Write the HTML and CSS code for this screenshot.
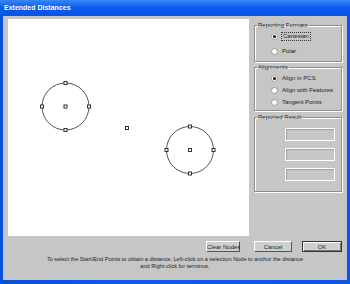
FILE: index.html
```html
<!DOCTYPE html>
<html lang="en">
<head>
<meta charset="UTF-8">
<title>Extended Distances</title>
<link rel="stylesheet" href="styles.css">
</head>
<body>
<div class="window">
  <div class="titlebar">Extended Distances</div>
  <div class="client">
    <div class="main">
      <div class="canvas">
        <svg width="241" height="217" viewBox="0 0 241 217">
          <g fill="none" stroke="#555" stroke-width="1">
            <circle cx="57.5" cy="87.5" r="23.5"/>
            <circle cx="182" cy="131" r="23.5"/>
          </g>
          <g fill="#fff" stroke="#333" stroke-width="1">
            <rect x="56" y="62.5" width="3" height="3"/>
            <rect x="56" y="109.5" width="3" height="3"/>
            <rect x="32.5" y="86" width="3" height="3"/>
            <rect x="79.5" y="86" width="3" height="3"/>
            <rect x="56" y="86" width="3" height="3"/>
            <rect x="180.5" y="106" width="3" height="3"/>
            <rect x="180.5" y="153" width="3" height="3"/>
            <rect x="157" y="129.5" width="3" height="3"/>
            <rect x="204" y="129.5" width="3" height="3"/>
            <rect x="180.5" y="129.5" width="3" height="3"/>
            <rect x="117.5" y="107.5" width="3" height="3"/>
          </g>
        </svg>
      </div>
      <div class="side">
        <fieldset class="group formats">
          <legend>Reporting Formats</legend>
          <label class="radio"><span class="dot checked"></span><span class="focus">Cartesian</span></label>
          <label class="radio"><span class="dot"></span>Polar</label>
        </fieldset>
        <fieldset class="group aligns">
          <legend>Alignments</legend>
          <label class="radio"><span class="dot checked"></span>Align in PCS</label>
          <label class="radio"><span class="dot"></span>Align with Features</label>
          <label class="radio"><span class="dot"></span>Tangent Points</label>
        </fieldset>
        <fieldset class="group result">
          <legend>Reported Result</legend>
          <div class="field"></div>
          <div class="field"></div>
          <div class="field"></div>
        </fieldset>
      </div>
    </div>
    <div class="buttons">
      <button class="btn clear">Clear Nodes</button>
      <button class="btn cancel">Cancel</button>
      <button class="btn ok">OK</button>
    </div>
    <p class="hint">To select the Start/End Points to obtain a distance. Left-click on a selection Node to anchor the distance<br>and Right-click for terminus.</p>
  </div>
</div>
</body>
</html>
```

FILE: styles.css
```css
body {
  margin: 0;
  padding: 0;
  font-family: "Liberation Sans", Arial, sans-serif;
}

.window {
  width: 350px;
  height: 284px;
  box-sizing: border-box;
  display: flex;
  flex-direction: column;
  padding: 0 3px 4px 3px;
  background: linear-gradient(to right, #0a4fd8, #0e5cf0 40%, #0b55e8);
}

.titlebar {
  height: 16px;
  line-height: 15px;
  color: #fff;
  font-size: 7px;
  font-weight: bold;
  background: linear-gradient(to bottom, #3a86fa, #0c5eec 45%, #0654e4);
  margin: 0 -3px;
  padding-left: 4px;
}

.client {
  flex: 1;
  display: flex;
  flex-direction: column;
  background: #c6c6c6;
  padding: 3px 5px 0 5px;
}

.main {
  display: flex;
  gap: 5px;
}

.canvas {
  width: 241px;
  height: 217px;
  background: #fff;
}

.canvas svg {
  display: block;
}

.side {
  width: 90px;
  padding-top: 2px;
}

.group {
  margin: 0 0 1px 0;
  padding: 0 0 0 16px;
  border: 1px solid #8e8e8e;
  box-shadow: 1px 1px 0 #fff, inset 1px 1px 0 #fff;
  display: flex;
  flex-direction: column;
  font-size: 6px;
  color: #222;
}

.group legend {
  padding: 0 1px;
  margin-left: -14px;
  line-height: 8px;
  font-size: 6px;
  color: #222;
}

.formats {
  padding-top: 2px;
  padding-bottom: 5px;
  gap: 5px;
}

.aligns {
  padding-top: 2px;
  padding-bottom: 3px;
  gap: 2px;
}

.result {
  padding-top: 7px;
  padding-bottom: 10px;
  margin-top: 2px;
}

.radio {
  display: flex;
  align-items: center;
  height: 10px;
  gap: 4px;
  white-space: nowrap;
}

.dot {
  width: 5px;
  height: 5px;
  border-radius: 50%;
  background: #fff;
  border: 1px solid #9a9a9a;
  box-sizing: content-box;
  display: flex;
  align-items: center;
  justify-content: center;
}

.dot.checked::after {
  content: "";
  width: 3px;
  height: 3px;
  border-radius: 50%;
  background: #111;
}

.focus {
  outline: 1px dotted #333;
  padding: 0 1px;
  line-height: 7px;
}

.field {
  align-self: flex-end;
  width: 48px;
  height: 11px;
  margin-right: 6px;
  margin-bottom: 7px;
  background: #c6c6c6;
  border: 1px solid #fff;
  box-shadow: inset 1px 1px 0 #a0a0a0;
}

.field:last-child {
  margin-bottom: 0;
}

.buttons {
  display: flex;
  justify-content: flex-end;
  margin-top: 5px;
  gap: 10px;
}

.btn {
  height: 11px;
  padding: 0;
  white-space: nowrap;
  font-family: "Liberation Sans", Arial, sans-serif;
  font-size: 6px;
  color: #222;
  background: #cfcfcf;
  border: 1px solid;
  border-color: #fff #555 #555 #fff;
  border-radius: 0;
}

.clear {
  width: 34px;
  margin-right: 4px;
}

.cancel {
  width: 38px;
}

.ok {
  width: 40px;
  border-color: #333;
  box-shadow: inset 1px 1px 0 #fff, inset -1px -1px 0 #777;
}

.hint {
  margin: 4px 0 0 0;
  text-align: center;
  font-size: 5.6px;
  line-height: 6.6px;
  color: #222;
}
```
